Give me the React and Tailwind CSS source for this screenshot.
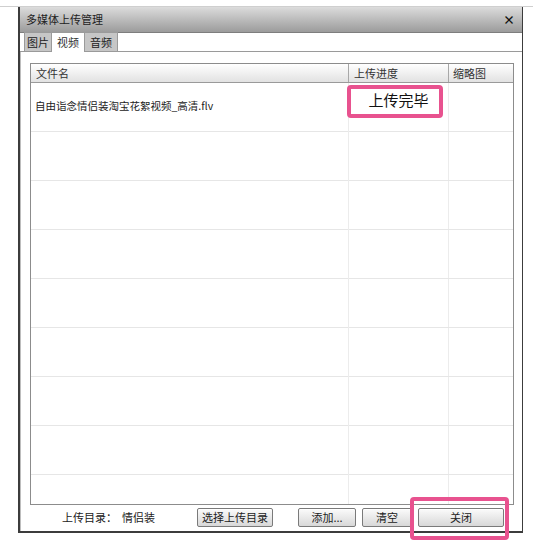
const rows = [
  { name: '自由诣念情侣装淘宝花絮视频_高清.flv', status: '上传完毕' },
  {}, {}, {}, {}, {}, {}, {}, {},
];

function Button({ children, className = '' }) {
  return (
    <button
      className={`h-[19px] rounded-[2px] border border-[#7a7a7a] bg-linear-to-b from-[#fbfbfb] to-[#d8d8d8] text-[11px] text-[#222] leading-none shadow-[inset_0_1px_0_#fff] ${className}`}
    >
      {children}
    </button>
  );
}

export default function App() {
  return (
    <div
      className="relative w-[533px] h-[544px] bg-white overflow-hidden"
      style={{ fontFamily: '"Noto Sans CJK SC", "Liberation Sans", sans-serif' }}
    >
      <div className="h-[7px] flex items-end">
        <div className="w-full h-px bg-[#cfcfcf]" />
      </div>

      <div className="ml-[18px] w-[505px] h-[526px] flex flex-col border-l-2 border-r border-b-2 border-[#3c3c3c] bg-white">
        {/* title bar */}
        <div className="h-[26px] flex items-center justify-between pl-[6px] pr-[7px] bg-linear-to-b from-[#dcdcdc] to-[#9c9c9c] border-b border-[#7e7e7e]">
          <span className="text-[11px] text-[#222]">多媒体上传管理</span>
          <span className="text-[12px] font-bold text-[#111] leading-none">×</span>
        </div>

        {/* tabs */}
        <div className="h-[19px] flex items-end pl-[4px] border-b border-[#9a9a9a]">
          <div className="h-[19px] w-[28px] flex items-center justify-center bg-[#c6c6c6] border-l border-t border-r border-[#9a9a9a] text-[11px] text-[#222]">图片</div>
          <div className="h-[20px] w-[32px] -mb-px flex items-center justify-center bg-white border-t border-[#9a9a9a] text-[11px] text-[#333]">视频</div>
          <div className="h-[19px] w-[34px] flex items-center justify-center bg-[#c6c6c6] border-l border-t border-r border-[#9a9a9a] text-[11px] text-[#222]">音频</div>
        </div>

        {/* content */}
        <div className="flex-1 flex flex-col pl-[9px] pr-[8px] pt-[11px] border-l border-[#bdbdbd]">
          <div className="border border-[#8c8c8c] flex flex-col">
            <div className="h-[19px] flex bg-linear-to-b from-[#ffffff] to-[#e2e2e2] border-b border-[#9a9a9a] text-[11px] text-[#333]">
              <div className="w-[318px] flex items-center pl-[5px] border-r border-[#a8a8a8]">文件名</div>
              <div className="w-[100px] flex items-center pl-[5px] border-r border-[#a8a8a8]">上传进度</div>
              <div className="flex-1 flex items-center pl-[4px]">缩略图</div>
            </div>
            <div className="h-[421px] overflow-hidden">
              {rows.map((r, i) => (
                <div key={i} className="h-[49px] flex border-b border-[#e6e6e6]">
                  <div className="w-[318px] flex items-center pl-[4px] border-r border-[#ececec] text-[10.5px] text-[#222] -mt-[2px]">{r.name}</div>
                  <div className="w-[100px] flex items-start justify-center pt-[6px] border-r border-[#ececec] text-[15px] text-[#111]">{r.status}</div>
                  <div className="flex-1" />
                </div>
              ))}
            </div>
          </div>

          <div className="flex-1 flex items-center text-[11px] text-[#222] pb-[1px]">
            <span className="ml-[32px] w-[135px]">上传目录：&nbsp;&nbsp;情侣装</span>
            <Button className="w-[76px]">选择上传目录</Button>
            <Button className="w-[58px] ml-[25px]">添加...</Button>
            <Button className="w-[50px] ml-[6px]">清空</Button>
            <Button className="w-[86px] ml-[6px]">关闭</Button>
          </div>
        </div>
      </div>

      {/* annotation boxes */}
      <div className="absolute left-[347px] top-[85px] w-[96px] h-[33px] rounded-[4px] border-[4px] border-[#e8528f]" />
      <div className="absolute left-[410px] top-[497px] w-[99px] h-[43px] rounded-[4px] border-[4px] border-[#e8528f]" />
    </div>
  );
}
